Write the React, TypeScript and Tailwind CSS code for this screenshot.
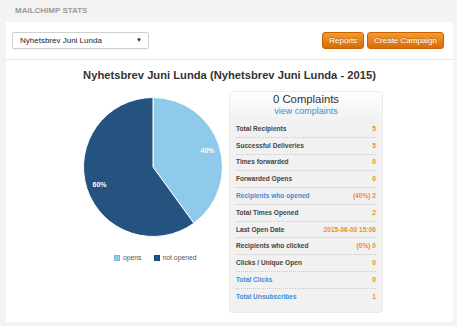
import React from "react";

const rows: { label: string; value: string; blue?: boolean }[] = [
  { label: "Total Recipients", value: "5" },
  { label: "Successful Deliveries", value: "5" },
  { label: "Times forwarded", value: "0" },
  { label: "Forwarded Opens", value: "0" },
  { label: "Recipients who opened", value: "(40%) 2", blue: true },
  { label: "Total Times Opened", value: "2" },
  { label: "Last Open Date", value: "2015-06-03 15:06" },
  { label: "Recipients who clicked", value: "(0%) 0" },
  { label: "Clicks / Unique Open", value: "0" },
  { label: "Total Clicks", value: "0", blue: true },
  { label: "Total Unsubscribes", value: "1", blue: true },
];

function Pie() {
  const cx = 70;
  const cy = 70;
  const r = 69.5;
  const a = (144 * Math.PI) / 180;
  const ex = cx + r * Math.sin(a);
  const ey = cy - r * Math.cos(a);
  return (
    <svg width="140" height="140" viewBox="0 0 140 140">
      <path
        d={`M${cx} ${cy} L${cx} ${cy - r} A${r} ${r} 0 0 1 ${ex} ${ey} Z`}
        fill="#8fcaea"
        stroke="#ffffff"
        strokeWidth="1"
        strokeLinejoin="round"
      />
      <path
        d={`M${cx} ${cy} L${ex} ${ey} A${r} ${r} 0 1 1 ${cx} ${cy - r} Z`}
        fill="#25537f"
        stroke="#ffffff"
        strokeWidth="1"
        strokeLinejoin="round"
      />
      <text x="124.5" y="56" fill="#ffffff" fontSize="7" fontWeight="bold" textAnchor="middle" fontFamily="Liberation Sans, Arial, sans-serif">
        40%
      </text>
      <text x="16.5" y="90" fill="#ffffff" fontSize="7" fontWeight="bold" textAnchor="middle" fontFamily="Liberation Sans, Arial, sans-serif">
        60%
      </text>
    </svg>
  );
}

export default function App() {
  return (
    <div className="w-[461px] h-[331px] bg-white" style={{ fontFamily: '"Liberation Sans", Arial, sans-serif' }}>
      <div className="w-[457px] h-[326px] bg-[#f3f3f3] pl-[6px] pr-[4px] pb-[4px] flex flex-col">
        <div className="h-[22px] flex items-center pl-[9px] text-[8px] font-bold text-[#9a9a9a]">
          MAILCHIMP STATS
        </div>
        <div className="flex-1 bg-white flex flex-col">
          <div className="h-[38px] border-b border-[#e6e6e6] flex items-center justify-between pl-[6px] pr-[9px]">
            <div className="w-[137px] h-[17px] border border-[#cfcfcf] rounded-[2px] bg-white shadow-[0_1px_1px_rgba(0,0,0,0.06)] flex items-center justify-between pl-[7px] pr-[6px] text-[8px] text-[#222]">
              <span>Nyhetsbrev Juni Lunda</span>
              <span className="text-[6px] text-[#222]">▼</span>
            </div>
            <div className="flex items-center gap-[3px]">
              <div className="h-[17px] px-[6px] rounded-[3px] border border-[#c96100] bg-gradient-to-b from-[#f39a2e] to-[#d96c02] text-white text-[8px] flex items-center [text-shadow:0_-1px_0_rgba(0,0,0,0.25)]">
                Reports
              </div>
              <div className="h-[17px] px-[6px] rounded-[3px] border border-[#c96100] bg-gradient-to-b from-[#f39a2e] to-[#d96c02] text-white text-[8px] flex items-center [text-shadow:0_-1px_0_rgba(0,0,0,0.25)]">
                Create Campaign
              </div>
            </div>
          </div>
          <div className="h-[31px] flex items-center justify-center text-[11.2px] font-bold text-[#333]">
            Nyhetsbrev Juni Lunda (Nyhetsbrev Juni Lunda - 2015)
          </div>
          <div className="flex">
            <div className="w-[223px] flex flex-col">
              <div className="ml-[77px] mt-[6px]">
                <Pie />
              </div>
              <div className="mt-[16px] ml-[108px] flex items-center text-[6.8px] text-[#555]">
                <span className="w-[6px] h-[6px] bg-[#8fcaea] border border-[#7bb8dc] mr-[3px]" />
                <span className="mr-[12px]">opens</span>
                <span className="w-[6px] h-[6px] bg-[#25537f] border border-[#1d4670] mr-[3px]" />
                <span>not opened</span>
              </div>
            </div>
            <div className="w-[154px] h-[222px] rounded-[4px] bg-[#f1f1f1] border border-[#ebebeb] flex flex-col overflow-hidden">
              <div className="h-[29px] bg-gradient-to-b from-[#ffffff] to-[#f1f1f1] flex flex-col items-center pt-[1px]">
                <div className="text-[11.3px] leading-[13px] text-[#333]">0 Complaints</div>
                <div className="text-[9px] leading-[11px] text-[#3b8fd1]">view complaints</div>
              </div>
              <div className="px-[6px] flex flex-col">
                {rows.map((r, i) => (
                  <div
                    key={r.label}
                    className={`h-[16.77px] flex items-center justify-between text-[6.6px] font-bold ${
                      i < rows.length - 1 ? "border-b border-dotted border-[#cccccc]" : ""
                    }`}
                  >
                    <span className={r.blue ? "text-[#3b8fd1]" : "text-[#444]"}>{r.label}</span>
                    <span className="text-[#f28a2c]">{r.value}</span>
                  </div>
                ))}
              </div>
            </div>
          </div>
        </div>
      </div>
    </div>
  );
}
